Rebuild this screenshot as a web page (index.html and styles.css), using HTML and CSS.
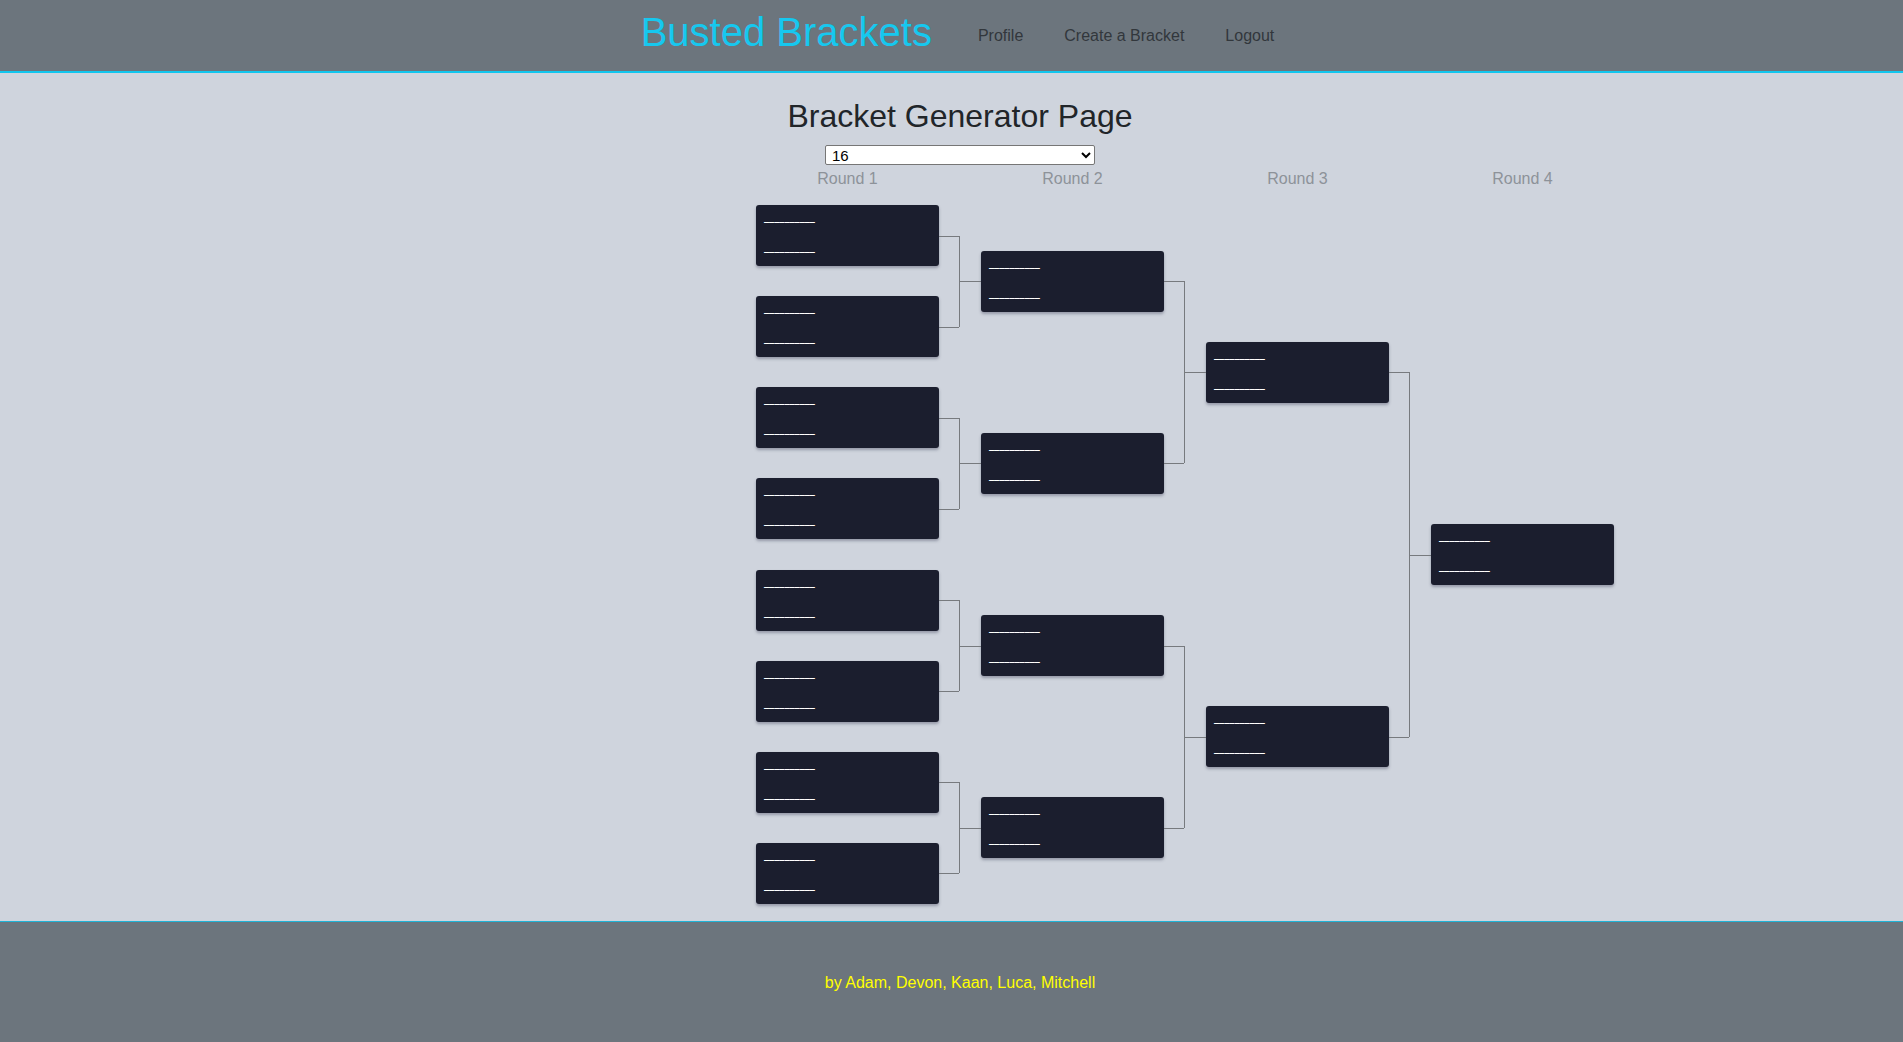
FILE: index.html
```html
<!DOCTYPE html>
<html lang="en">
<head>
<meta charset="utf-8">
<title>Busted Brackets</title>
<link rel="stylesheet" href="styles.css">
</head>
<body>
<header class="topbar">
  <a class="brand" href="#">Busted Brackets</a>
  <nav class="nav">
    <a class="nav-link" href="#">Profile</a>
    <a class="nav-link" href="#">Create a Bracket</a>
    <a class="nav-link" href="#">Logout</a>
  </nav>
</header>
<main class="main">
  <div class="intro">
    <h1 class="title">Bracket Generator Page</h1>
    <select class="size-select">
      <option>16</option>
      <option>8</option>
      <option>4</option>
    </select>
  </div>
  <div class="board">
    <div class="labels">
      <div class="label">Round 1</div>
      <div class="label">Round 2</div>
      <div class="label">Round 3</div>
      <div class="label">Round 4</div>
    </div>
    <div class="bracket">
      <div class="round r1">
        <div class="slot"><div class="match"><div class="team">__________</div><div class="team">__________</div></div></div>
        <div class="slot"><div class="match"><div class="team">__________</div><div class="team">__________</div></div></div>
        <div class="slot"><div class="match"><div class="team">__________</div><div class="team">__________</div></div></div>
        <div class="slot"><div class="match"><div class="team">__________</div><div class="team">__________</div></div></div>
        <div class="slot"><div class="match"><div class="team">__________</div><div class="team">__________</div></div></div>
        <div class="slot"><div class="match"><div class="team">__________</div><div class="team">__________</div></div></div>
        <div class="slot"><div class="match"><div class="team">__________</div><div class="team">__________</div></div></div>
        <div class="slot"><div class="match"><div class="team">__________</div><div class="team">__________</div></div></div>
      </div>
      <div class="round r2">
        <div class="slot"><div class="match"><div class="team">__________</div><div class="team">__________</div></div></div>
        <div class="slot"><div class="match"><div class="team">__________</div><div class="team">__________</div></div></div>
        <div class="slot"><div class="match"><div class="team">__________</div><div class="team">__________</div></div></div>
        <div class="slot"><div class="match"><div class="team">__________</div><div class="team">__________</div></div></div>
      </div>
      <div class="round r3">
        <div class="slot"><div class="match"><div class="team">__________</div><div class="team">__________</div></div></div>
        <div class="slot"><div class="match"><div class="team">__________</div><div class="team">__________</div></div></div>
      </div>
      <div class="round r4 final">
        <div class="slot"><div class="match"><div class="team">__________</div><div class="team">__________</div></div></div>
      </div>
    </div>
  </div>
</main>
<footer class="footer">
  <p class="credits">by Adam, Devon, Kaan, Luca, Mitchell</p>
</footer>
</body>
</html>
```

FILE: styles.css
```css
html, body {
  margin: 0;
  padding: 0;
}

body {
  font-family: "Liberation Sans", Arial, sans-serif;
  font-size: 16px;
  background: #cfd4dd;
  color: #212529;
  min-height: 100vh;
  display: flex;
  flex-direction: column;
}

.topbar {
  height: 71px;
  background: #6c757d;
  border-bottom: 2px solid #12c6ee;
  display: flex;
  justify-content: center;
  align-items: flex-start;
  padding-left: 12px;
}

.brand {
  margin-top: 10px;
  margin-right: 46px;
  font-size: 40px;
  color: #16c8ef;
  text-decoration: none;
}

.nav {
  margin-top: 27px;
  display: flex;
  gap: 41px;
}

.nav-link {
  color: #32373c;
  text-decoration: none;
  font-size: 16px;
}

.main {
  flex: 1;
  display: flex;
  flex-direction: column;
}

.intro {
  padding-left: 17px;
  text-align: center;
}

.title {
  margin: 25px 0 0;
  font-size: 32px;
  font-weight: normal;
  color: #212529;
}

.size-select {
  display: block;
  margin: 10px auto 0;
  width: 270px;
  height: 20px;
  padding: 0 0 0 2px;
  font-family: "Liberation Sans", Arial, sans-serif;
  font-size: 15px;
  color: #000;
  background: #fff;
  border: 1px solid #767676;
  border-radius: 2px;
}

.board {
  margin-left: 756px;
  margin-top: 5px;
}

.labels {
  display: flex;
}

.label {
  width: 183px;
  margin-right: 42px;
  text-align: center;
  color: #8d9299;
  font-size: 16px;
}

.bracket {
  margin-top: 2px;
  display: flex;
  height: 729px;
}

.round {
  width: 225px;
  display: flex;
  flex-direction: column;
}

.slot {
  flex: 1;
  position: relative;
  display: flex;
  align-items: center;
}

.match {
  position: relative;
  width: 183px;
  height: 61px;
  box-sizing: border-box;
  padding: 6px 8px 0;
  background: #1b1e2e;
  border-radius: 3px;
  box-shadow: 0 2px 3px rgba(40, 44, 70, 0.35);
}

.team {
  font-family: "DejaVu Sans", sans-serif;
  font-size: 10.2px;
  font-weight: bold;
  line-height: 12px;
  height: 12px;
  color: #ffffff;
  white-space: nowrap;
}

.team + .team {
  margin-top: 18px;
}

/* outgoing horizontal connector */
.round:not(.final) .slot::after {
  content: "";
  position: absolute;
  left: 183px;
  width: 20px;
  top: 50%;
  border-top: 1px solid #777a7e;
}

/* vertical connector joining a pair */
.round:not(.final) .slot:nth-child(odd)::before {
  content: "";
  position: absolute;
  left: 203px;
  top: 50%;
  bottom: 0;
  border-left: 1px solid #777a7e;
}

.round:not(.final) .slot:nth-child(even)::before {
  content: "";
  position: absolute;
  left: 203px;
  top: 0;
  bottom: 50%;
  border-left: 1px solid #777a7e;
}

/* incoming horizontal connector */
.r2 .match::before,
.r3 .match::before,
.r4 .match::before {
  content: "";
  position: absolute;
  left: -22px;
  width: 22px;
  top: 50%;
  border-top: 1px solid #777a7e;
}

.footer {
  height: 120px;
  background: #6c757d;
  border-top: 1px solid #1fb3d6;
  display: flex;
  align-items: center;
  justify-content: center;
  padding-left: 17px;
}

.credits {
  margin: 2px 0 0;
  color: #ffff00;
  font-size: 16px;
}
```
